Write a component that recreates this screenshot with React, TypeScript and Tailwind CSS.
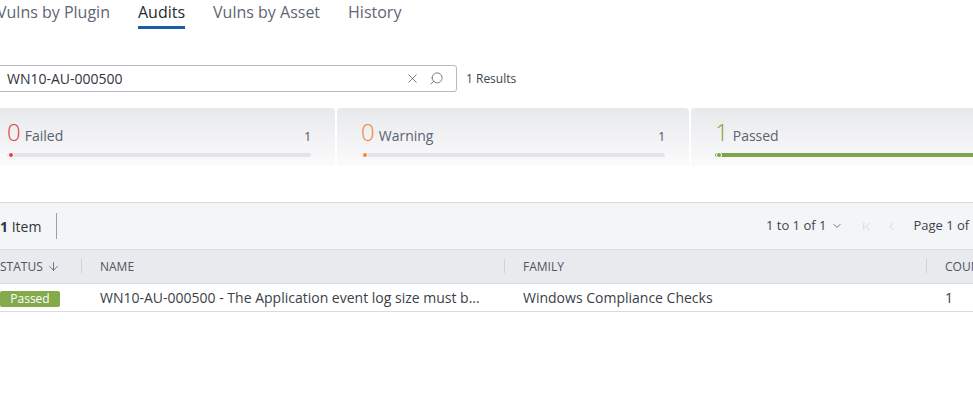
import { X, Search, ArrowDown, ChevronDown, ChevronLeft, ChevronFirst } from "lucide-react";

const tabs = ["Vulns by Plugin", "Audits", "Vulns by Asset", "History"];

interface StatCardProps {
  count: number;
  label: string;
  total?: number;
  numberClass: string;
  dotClass: string;
  fill: boolean;
  barClass: string;
}

function StatCard({ count, label, total, numberClass, dotClass, fill, barClass }: StatCardProps) {
  return (
    <div className="w-[352px] shrink-0 h-[58px] rounded-t-[4px] bg-gradient-to-b from-[#e8e9ec] to-[#fbfbfc] px-[24px] pt-[9px]">
      <div className="flex items-end justify-between">
        <div className="flex items-baseline gap-[4px]">
          <span className={`text-[24px] font-light leading-[30px] ${numberClass}`}>{count}</span>
          <span className="text-[14px] text-[#5b6270]">{label}</span>
        </div>
        {total !== undefined && <span className="text-[12px] text-[#4a5160] mb-[1px]">{total}</span>}
      </div>
      <div className="relative mt-[6px] h-[4px]">
        <div className={`h-[4px] rounded-full ${fill ? barClass : "bg-[#e3e4e8]"}`} />
        <div className={`absolute left-[1px] top-[-1px] w-[6px] h-[6px] rounded-full border border-white ${dotClass}`} />
      </div>
    </div>
  );
}

export default function App() {
  return (
    <div className="w-[973px] h-[407px] overflow-hidden bg-white text-[#3d4350]" style={{ fontFamily: '"Open Sans", "Noto Sans", sans-serif' }}>
      <div className="-ml-[17px] w-[1010px]">
        {/* tabs */}
        <div className="flex gap-[28px] pl-[14px] h-[30px]">
          {tabs.map((t) => (
            <div key={t} className="relative">
              <span className={`text-[16px] leading-[24px] ${t === "Audits" ? "text-[#252a33]" : "text-[#5f6673]"}`}>{t}</span>
              {t === "Audits" && <div className="absolute left-0 right-0 top-[26px] h-[3px] bg-[#1f5aa8]" />}
            </div>
          ))}
        </div>

        {/* search */}
        <div className="flex items-center mt-[35px] gap-[9px]">
          <div className="w-[474px] h-[27px] border border-[#b5b9c0] rounded-[3px] flex items-center pl-[23px] pr-[12px]">
            <span className="flex-1 text-[14px] text-[#2f343d]">WN10-AU-000500</span>
            <X size={15} strokeWidth={1.3} className="text-[#5d6470]" />
            <Search size={15} strokeWidth={1.3} className="text-[#5d6470] ml-[9px] -scale-x-100" />
          </div>
          <span className="text-[12px] text-[#3d4350]">1 Results</span>
        </div>

        {/* cards */}
        <div className="flex gap-[2px] mt-[16px]">
          <StatCard count={0} label="Failed" total={1} numberClass="text-[#e0434d]" dotClass="bg-[#e0434d]" fill={false} barClass="" />
          <StatCard count={0} label="Warning" total={1} numberClass="text-[#f0873a]" dotClass="bg-[#f0873a]" fill={false} barClass="" />
          <StatCard count={1} label="Passed" numberClass="text-[#7ea547]" dotClass="bg-[#7ea547]" fill={true} barClass="bg-[#7ea547] h-[3px]" />
        </div>

        {/* toolbar */}
        <div className="mt-[36px] h-[47px] border-t border-[#dadbdf] bg-[#f4f5f7] flex items-center pl-[17px] pr-[13px]">
          <span className="text-[14px] text-[#2f343d]"><span className="font-bold">1</span> Item</span>
          <div className="ml-[15px] w-px h-[26px] bg-[#9aa0a9]" />
          <div className="ml-auto flex items-center text-[13px] text-[#3d4350]">
            <span>1 to 1 of 1</span>
            <ChevronDown size={12} strokeWidth={1.6} className="ml-[5px] text-[#4a5160]" />
            <ChevronFirst size={13} strokeWidth={1.2} className="ml-[17px] text-[#c2c6cc]" />
            <ChevronLeft size={13} strokeWidth={1.2} className="ml-[12px] text-[#c2c6cc]" />
            <span className="ml-[15px]">Page 1 of 1</span>
          </div>
        </div>

        {/* table header */}
        <div className="h-[34px] bg-[#e9eaed] border-t border-[#dadbdf] flex items-center text-[12px] text-[#4e5562] uppercase">
          <div className="w-[99px] shrink-0 pl-[17px] flex items-center gap-[4px] relative">
            <span>Status</span>
            <ArrowDown size={13} strokeWidth={1.5} className="text-[#4e5562]" />
            <div className="absolute right-0 top-[1px] w-px h-[14px] bg-[#cfd2d7]" />
          </div>
          <div className="w-[423px] shrink-0 pl-[18px] relative">
            <span>Name</span>
            <div className="absolute right-0 top-[1px] w-px h-[14px] bg-[#cfd2d7]" />
          </div>
          <div className="w-[422px] shrink-0 pl-[18px] relative">
            <span>Family</span>
            <div className="absolute right-0 top-[1px] w-px h-[14px] bg-[#cfd2d7]" />
          </div>
          <div className="shrink-0 pl-[18px]">
            <span>Count</span>
          </div>
        </div>

        {/* row */}
        <div className="h-[29px] border-t border-b border-[#dadbdf] flex items-center text-[14px] text-[#3a3f48]">
          <div className="w-[99px] shrink-0 pl-[17px]">
            <span className="inline-flex items-center justify-center w-[60px] h-[16px] rounded-[2px] bg-[#84aa4c] text-white text-[12px] leading-none">Passed</span>
          </div>
          <div className="w-[423px] shrink-0 pl-[18px] whitespace-nowrap">WN10-AU-000500 - The Application event log size must b...</div>
          <div className="w-[422px] shrink-0 pl-[18px]">Windows Compliance Checks</div>
          <div className="shrink-0 pl-[18px]">1</div>
        </div>
      </div>
    </div>
  );
}
